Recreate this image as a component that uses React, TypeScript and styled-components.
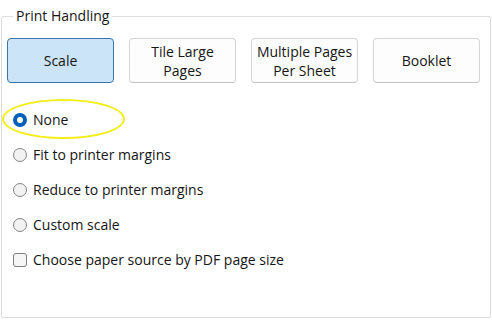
import styled, { createGlobalStyle } from "styled-components";

const GlobalStyle = createGlobalStyle`
  html, body {
    margin: 0;
    background: #ffffff;
  }
  body {
    font-family: "Open Sans", "Noto Sans", sans-serif;
    color: #151515;
  }
`;

const Page = styled.div`
  width: 492px;
  height: 325px;
  padding: 0 1px;
  box-sizing: border-box;
`;

const Group = styled.fieldset`
  margin: 0;
  height: 318px;
  box-sizing: border-box;
  border: 1px solid #dcdcdc;
  border-radius: 2px;
  padding: 0 0 0 5px;
`;

const Legend = styled.legend`
  margin-left: 6px;
  padding: 0 3px;
  font-size: 14px;
  line-height: 32px;
`;

const ModeBar = styled.div`
  display: flex;
  gap: 15px;
  margin-top: 6px;
`;

const ModeButton = styled.button<{ $active?: boolean }>`
  width: 107px;
  height: 45px;
  box-sizing: border-box;
  padding: 0 4px;
  border-radius: 4px;
  border: 1px solid ${(p) => (p.$active ? "#3d73a8" : "#d4d4d4")};
  border-bottom-color: ${(p) => (p.$active ? "#3d73a8" : "#c4c4c4")};
  background: ${(p) => (p.$active ? "#cce4f7" : "#fdfdfd")};
  font-family: inherit;
  font-size: 14px;
  line-height: 19px;
  color: #151515;
  text-align: center;
`;

const Options = styled.div`
  display: flex;
  flex-direction: column;
  margin-top: 19px;
`;

const Option = styled.label`
  position: relative;
  display: flex;
  align-items: center;
  gap: 6px;
  height: 35px;
  padding-left: 6px;
  font-size: 14px;
`;

const Radio = styled.span<{ $checked?: boolean }>`
  width: 14px;
  height: 14px;
  box-sizing: border-box;
  border-radius: 50%;
  flex: none;
  background: ${(p) => (p.$checked ? "#ffffff" : "#f2f2f2")};
  border: ${(p) => (p.$checked ? "4px solid #005fb8" : "1px solid #858585")};
`;

const Check = styled.span`
  width: 14px;
  height: 14px;
  box-sizing: border-box;
  border-radius: 3px;
  flex: none;
  background: #f6f6f6;
  border: 1px solid #808080;
`;

// yellow callout drawn round the selected option
const Highlight = styled.span`
  position: absolute;
  left: -5px;
  top: -3px;
  width: 123px;
  height: 40px;
  box-sizing: border-box;
  border: 2px solid #f2ee1a;
  border-radius: 50%;
  pointer-events: none;
`;

const modes = [
  { label: ["Scale"], active: true },
  { label: ["Tile Large", "Pages"] },
  { label: ["Multiple Pages", "Per Sheet"] },
  { label: ["Booklet"] },
];

const scaleOptions = [
  "None",
  "Fit to printer margins",
  "Reduce to printer margins",
  "Custom scale",
];

export default function App() {
  return (
    <Page>
      <GlobalStyle />
      <Group>
        <Legend>Print Handling</Legend>
        <ModeBar>
          {modes.map((m) => (
            <ModeButton key={m.label.join(" ")} $active={m.active}>
              {m.label.map((line, i) => (
                <div key={i}>{line}</div>
              ))}
            </ModeButton>
          ))}
        </ModeBar>
        <Options>
          {scaleOptions.map((text, i) => (
            <Option key={text}>
              <Radio $checked={i === 0} />
              {text}
              {i === 0 && <Highlight />}
            </Option>
          ))}
          <Option>
            <Check />
            Choose paper source by PDF page size
          </Option>
        </Options>
      </Group>
    </Page>
  );
}
